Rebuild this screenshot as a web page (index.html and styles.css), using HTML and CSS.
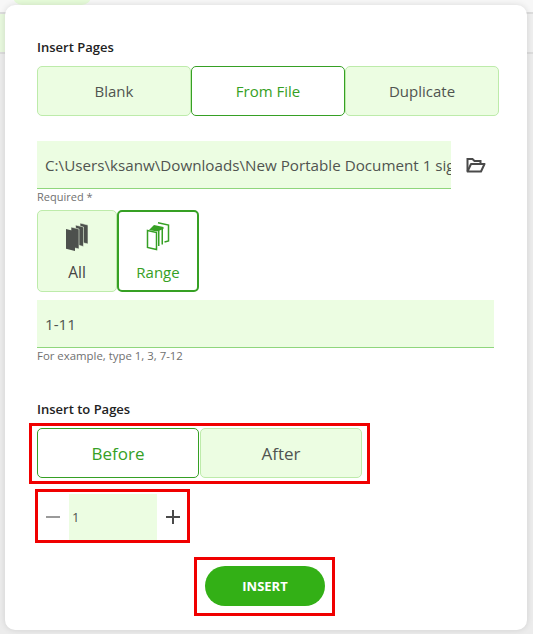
FILE: index.html
```html
<!DOCTYPE html>
<html lang="en">
<head>
    <meta charset="UTF-8">
    <meta name="viewport" content="width=device-width, initial-scale=1.0">
    <title>Insert Pages</title>
    <link rel="stylesheet" href="styles.css">
</head>
<body>
    <!-- App behind the dialog -->
    <div class="backdrop">
        <div class="topbar"><div class="tab-pill"></div></div>
        <div class="toolbar"><div class="toolbar-tab"></div></div>
    </div>

    <div class="dialog">
        <div class="section-label">Insert Pages</div>
        <div class="segmented">
            <button class="seg-btn">Blank</button>
            <button class="seg-btn active">From File</button>
            <button class="seg-btn">Duplicate</button>
        </div>

        <div class="file-row">
            <div class="field file-field">C:\Users\ksanw\Downloads\New Portable Document 1 sig</div>
            <svg class="folder-icon" width="20" height="16" viewBox="0 0 20 16" fill="none" stroke="#4a4a4a" stroke-width="2">
                <path d="M1.5 14V2h5l2 2h6v3"/>
                <path d="M1.5 14.5H15L18.5 7H5Z" stroke-linejoin="round"/>
            </svg>
        </div>
        <div class="hint">Required *</div>

        <div class="modes">
            <button class="mode-btn">
                <svg width="24" height="30" viewBox="0 0 24 30" fill="#4d514d" stroke="#ecfde2" stroke-width="0.6">
                    <path d="M15 1l8 2v19l-8-2z"/>
                    <path d="M10.500 3l8 2v19.500l-8-2z"/>
                    <path d="M6 5l8 2v20l-8-2z"/>
                    <path d="M1 7l9 2.200v19.800l-9-2.200z" stroke="none"/>
                </svg>
                <span>All</span>
            </button>
            <button class="mode-btn active">
                <svg width="24" height="30" viewBox="0 0 24 30" fill="none" stroke="#36a024">
                    <path d="M12 .8l10.500 2.200v16l-4 1" stroke-width="1.500"/>
                    <path d="M3 8l5-5 9.500 2v2L11 9.500z" fill="#36a024" stroke="none"/>
                    <path d="M12 7h1.500v17H12zM15.500 6H17v16.500h-1.500z" fill="#36a024" stroke="none"/>
                    <path d="M1.500 8.500l9 2v17l-9-2z" stroke-width="1.500" fill="#fff"/>
                </svg>
                <span>Range</span>
            </button>
        </div>

        <div class="field range-field">1-11</div>
        <div class="hint example">For example, type 1, 3, 7-12</div>

        <div class="section-label to-pages">Insert to Pages</div>
        <div class="red-box before-after">
            <button class="seg-btn active">Before</button>
            <button class="seg-btn">After</button>
        </div>

        <div class="red-box stepper">
            <span class="step-sign minus"></span>
            <div class="step-value">1</div>
            <span class="step-sign plus"></span>
        </div>

        <div class="red-box insert-box">
            <button class="insert-btn">INSERT</button>
        </div>
    </div>
</body>
</html>
```

FILE: styles.css
```css
/* General Styles */
body {
    font-family: "Open Sans", "Noto Sans", sans-serif;
    background-color: #ececec;
    margin: 0;
    height: 634px;
    overflow: hidden;
    position: relative;
}
button {
    font-family: inherit;
    padding: 0;
    cursor: pointer;
}

/* App behind the dialog */
.topbar {
    height: 12px;
    background-color: #f7f7f7;
    border-bottom: 2px solid #dcdcdc;
    overflow: hidden;
}
.tab-pill {
    width: 78px;
    height: 18px;
    margin: -13px 0 0 13px;
    border-radius: 9px;
    background-color: #e6fbd9;
}
.toolbar {
    height: 38px;
    background-color: #efefef;
    border-bottom: 2px solid #dcdcdc;
}
.toolbar-tab {
    width: 12px;
    height: 38px;
    background-color: #e8f8de;
}

/* Dialog */
.dialog {
    position: absolute;
    top: 5px;
    left: 5px;
    width: 462px;
    height: 592px;
    padding: 33px 28px 0 32px;
    background-color: #fff;
    border-radius: 10px;
    box-shadow: 0 0 6px rgba(0, 0, 0, 0.12);
}
.section-label {
    height: 18px;
    line-height: 18px;
    font-size: 13px;
    font-weight: 600;
    color: #222;
}
.to-pages {
    margin-top: 36px;
}

/* Segmented buttons */
.segmented {
    display: flex;
    margin-top: 10px;
}
.seg-btn {
    flex: 1;
    height: 50px;
    font-size: 15px;
    color: #505450;
    background-color: #ecfde2;
    border: 1px solid #bdebaa;
    border-radius: 5px;
}
.seg-btn.active {
    color: #36a024;
    background-color: #fff;
    border-color: #36a024;
}

/* Fields */
.file-row {
    display: flex;
    align-items: center;
    margin-top: 25px;
}
.field {
    height: 47px;
    line-height: 49px;
    padding-left: 8px;
    font-size: 15.200px;
    color: #505450;
    background-color: #ecfde2;
    border-bottom: 1px solid #8fd67c;
    overflow: hidden;
    white-space: nowrap;
}
.file-field {
    width: 406px;
}
.range-field {
    width: 449px;
    margin-top: 8px;
}
.folder-icon {
    margin-left: 15px;
}
.hint {
    height: 16px;
    line-height: 16px;
    font-size: 11px;
    color: #707070;
}
.hint.example {
    font-size: 11.400px;
}

/* All / Range */
.modes {
    display: flex;
    margin-top: 5px;
}
.mode-btn {
    width: 80px;
    height: 82px;
    display: flex;
    flex-direction: column;
    align-items: center;
    gap: 10px;
    padding-top: 11px;
    font-size: 15.500px;
    line-height: 20px;
    color: #444;
    background-color: #ecfde2;
    border: 1px solid #bdebaa;
    border-radius: 5px;
}
.mode-btn.active {
    width: 82px;
    font-size: 15px;
    color: #36a024;
    background-color: #fff;
    border: 2px solid #36a024;
    padding-top: 10px;
}

/* Red marks drawn on the screenshot */
.red-box {
    border: 3px solid #f00000;
    box-sizing: border-box;
}
.before-after {
    display: flex;
    gap: 1px;
    width: 341px;
    height: 61px;
    margin: 5px 0 0 -8px;
    padding: 2px 5px 3px 5px;
}
.before-after .seg-btn {
    font-size: 17px;
}
.stepper {
    display: flex;
    align-items: center;
    width: 155px;
    height: 54px;
    margin: 5px 0 0 -2px;
    padding: 2px 6px 0 8px;
}
.step-value {
    width: 85px;
    height: 46px;
    line-height: 46px;
    margin: 0 9px;
    padding-left: 3px;
    font-size: 13px;
    color: #505450;
    background-color: #ecfde2;
}
.step-sign {
    width: 14px;
    height: 2px;
    background-color: #9a9a9a;
    position: relative;
}
.step-sign.plus {
    background-color: #4a4a4a;
}
.step-sign.plus::after {
    content: "";
    position: absolute;
    left: 6px;
    top: -6px;
    width: 2px;
    height: 14px;
    background-color: #4a4a4a;
}
.insert-box {
    width: 141px;
    height: 59px;
    margin: 14px 0 0 157px;
    padding: 6px 0 0 8px;
}
.insert-btn {
    width: 120px;
    height: 40px;
    font-size: 13px;
    font-weight: 700;
    color: #fff;
    background-color: #33b016;
    border: none;
    border-radius: 20px;
}
```
